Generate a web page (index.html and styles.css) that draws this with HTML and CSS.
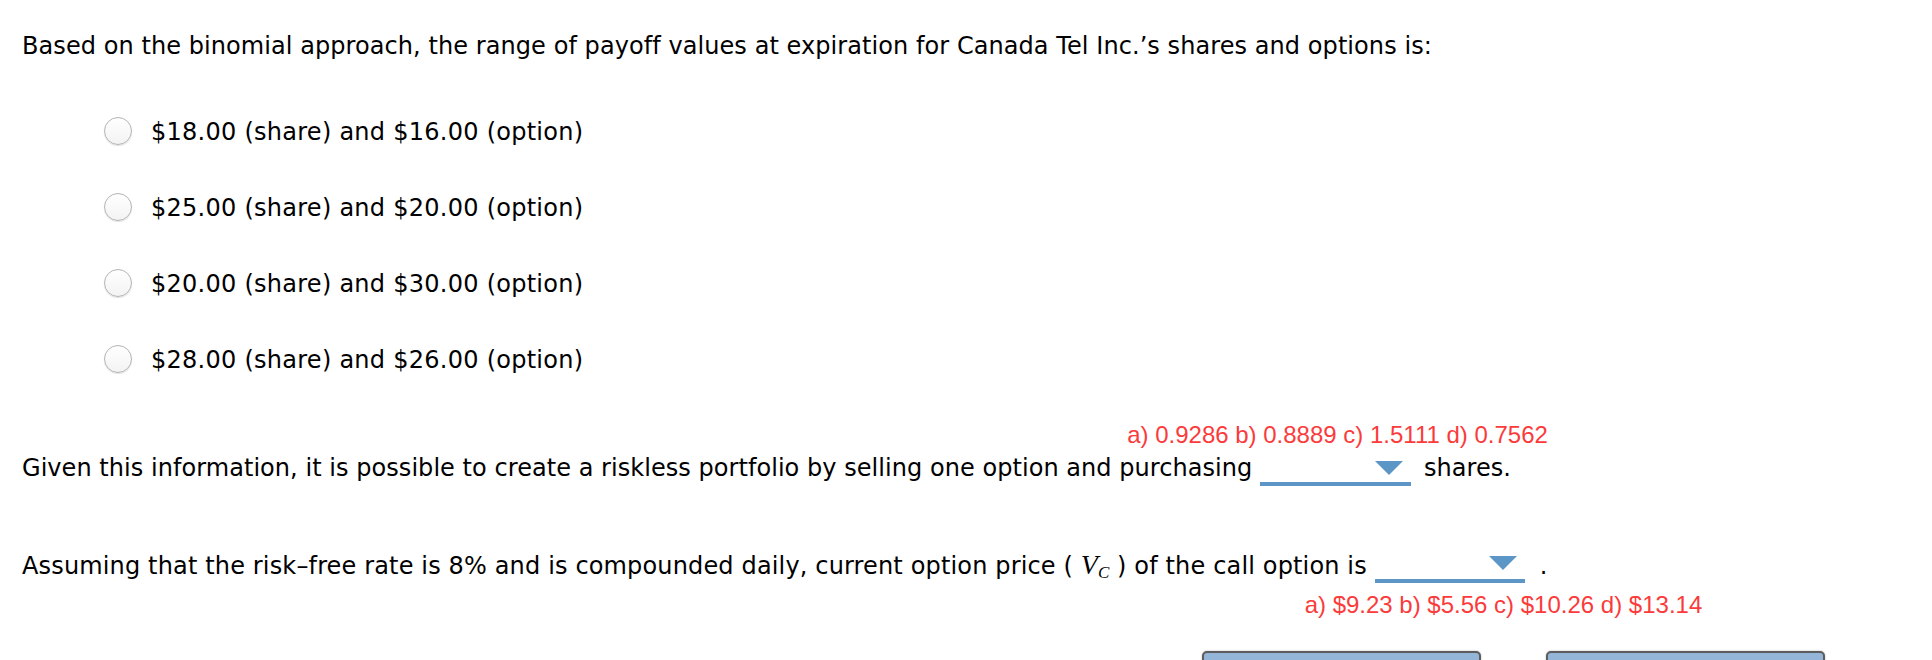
FILE: index.html
```html
<!DOCTYPE html>
<html>
<head>
<meta charset="utf-8">
<link rel="stylesheet" href="styles.css">
</head>
<body>
<div class="page">
  <p class="question">Based on the binomial approach, the range of payoff values at expiration for Canada Tel Inc.’s shares and options is:</p>
  <ul class="options">
    <li class="option"><span class="radio"></span><span class="label">$18.00 (share) and $16.00 (option)</span></li>
    <li class="option"><span class="radio"></span><span class="label">$25.00 (share) and $20.00 (option)</span></li>
    <li class="option"><span class="radio"></span><span class="label">$20.00 (share) and $30.00 (option)</span></li>
    <li class="option"><span class="radio"></span><span class="label">$28.00 (share) and $26.00 (option)</span></li>
  </ul>
  <p class="sentence s1">Given this information, it is possible to create a riskless portfolio by selling one option and purchasing <span class="dropdown d1"><span class="hint hint-above">a) 0.9286 b) 0.8889 c) 1.5111 d) 0.7562</span><span class="caret"></span></span><span class="after">shares.</span></p>
  <p class="sentence s2">Assuming that the risk–free rate is 8% and is compounded daily, current option price ( <span class="math"><i class="v">V</i><sub class="c">C</sub></span> ) of the call option is <span class="dropdown d2"><span class="caret"></span><span class="hint hint-below">a) $9.23 b) $5.56 c) $10.26 d) $13.14</span></span><span class="after2">.</span></p>
  <div class="buttons">
    <span class="btn"></span>
    <span class="btn"></span>
  </div>
</div>
</body>
</html>
```
FILE: styles.css
```css
html, body {
  margin: 0;
  padding: 0;
  background: #ffffff;
}
body {
  font-family: "DejaVu Sans", Verdana, sans-serif;
  font-size: 24px;
  line-height: 30px;
  color: #000000;
}
.page {
  padding: 31px 0 0 22px;
  width: 1910px;
  height: 629px;
  overflow: hidden;
}
.question {
  margin: 0;
  letter-spacing: 0.07px;
}
.options {
  list-style: none;
  margin: 33px 0 0 0;
  padding: 0 0 0 82px;
}
.option {
  height: 76px;
  display: flex;
  align-items: center;
}
.label {
  letter-spacing: 0.26px;
}
.radio {
  width: 26px;
  height: 26px;
  border-radius: 50%;
  border: 1px solid #b4b4b4;
  background: linear-gradient(#ffffff, #f3f3f3);
  box-shadow: 0 1px 1px rgba(0,0,0,0.12);
  margin-right: 19px;
  margin-top: -2px;
  flex: none;
}
.sentence {
  margin: 0;
  white-space: nowrap;
}
.s1 {
  margin-top: 55px;
  letter-spacing: 0.05px;
}
.s2 {
  margin-top: 64px;
  letter-spacing: 0.15px;
}
.dropdown {
  position: relative;
  display: inline-block;
  width: 151px;
  height: 21px;
  border-bottom: 4px solid #5b96c6;
  vertical-align: -10px;
  letter-spacing: 0;
}
.d2 {
  width: 150px;
  vertical-align: -9px;
}
.caret {
  position: absolute;
  right: 8px;
  top: 0;
  width: 0;
  height: 0;
  border-left: 14px solid transparent;
  border-right: 14px solid transparent;
  border-top: 14px solid #5b96c6;
}
.d2 .caret {
  top: -2px;
}
.hint {
  position: absolute;
  font-family: "Liberation Sans", Arial, sans-serif;
  font-size: 24px;
  line-height: 28px;
  color: #fb3b3b;
  white-space: nowrap;
  letter-spacing: 0;
}
.hint-above {
  left: 50%;
  transform: translateX(calc(-50% + 2px));
  bottom: 33px;
}
.hint-below {
  left: -70px;
  top: 33px;
}
.after {
  margin-left: 13px;
}
.after2 {
  margin-left: 15px;
}
.math {
  font-family: "Liberation Serif", "Times New Roman", serif;
  letter-spacing: 0;
}
.v {
  font-size: 28px;
}
.c {
  font-style: italic;
  font-size: 17px;
  vertical-align: -4px;
  line-height: 0;
}
.buttons {
  display: flex;
  gap: 65px;
  margin-top: 68px;
  padding-left: 1180px;
}
.btn {
  width: 275px;
  height: 40px;
  border: 2px solid #5c5c5c;
  border-radius: 5px;
  background: #95b5d8;
  box-shadow: 0 0 2px rgba(0,0,0,0.3);
}
```
